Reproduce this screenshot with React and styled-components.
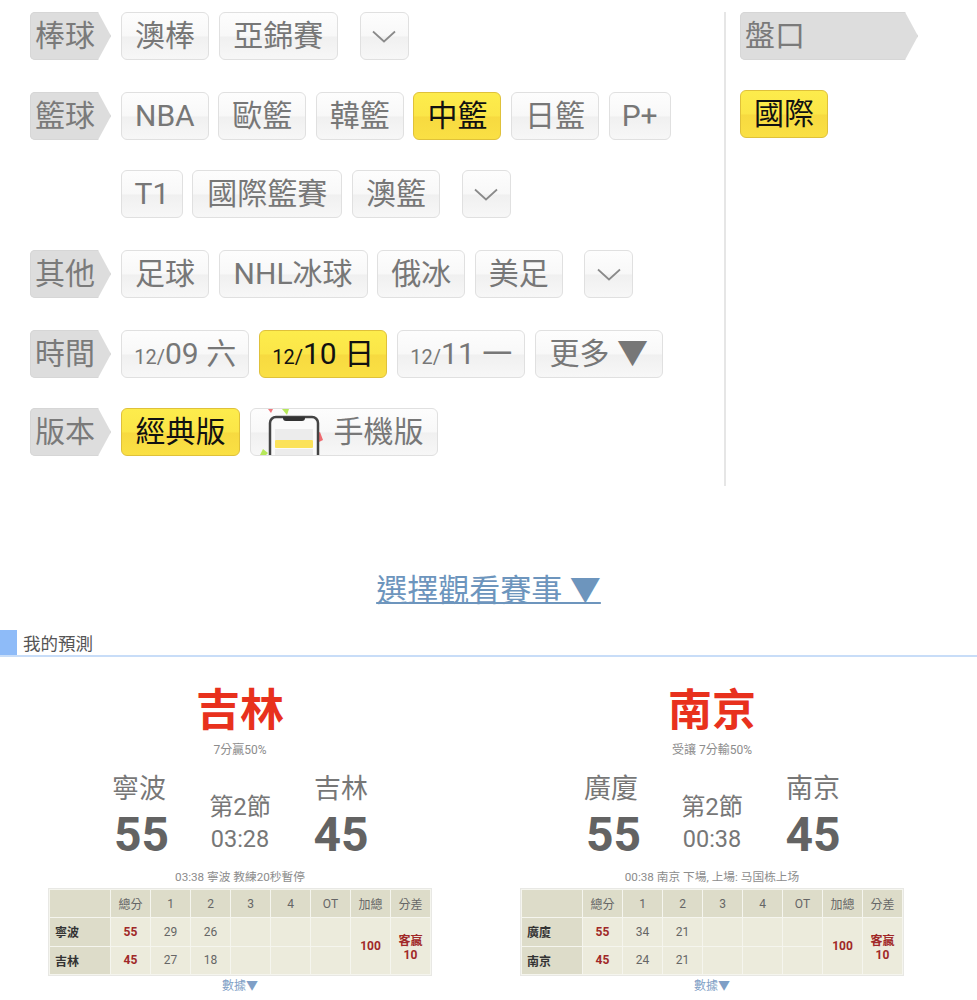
import React from 'react'
import styled, { createGlobalStyle, css } from 'styled-components'

const GlobalStyle = createGlobalStyle`
  html, body {
    margin: 0;
    padding: 0;
    background: #fff;
    font-family: Roboto, "Noto Sans CJK TC", sans-serif;
  }
`

const Page = styled.div`
  width: 977px;
`

const TopPanel = styled.div`
  display: flex;
  margin-top: 12px;
`

const LeftColumn = styled.div`
  width: 726px;
  height: 474px;
  box-sizing: border-box;
  border-right: 2px solid #e6e6e6;
  padding-left: 30px;
`

const RightColumn = styled.div`
  padding-left: 14px;
`

const Row = styled.div`
  display: flex;
  margin-bottom: ${(p) => (p.$tight ? 30 : 32)}px;
`

const Label = styled.div`
  flex: none;
  width: ${(p) => p.$width || 81}px;
  height: 48px;
  margin-right: 10px;
  padding-left: 5px;
  box-sizing: border-box;
  background: #dddddd;
  border-radius: 5px 0 0 5px;
  box-shadow: inset 0 0 0 1px #d6d6d6;
  clip-path: polygon(0 0, calc(100% - 13px) 0, 100% 50%, calc(100% - 13px) 100%, 0 100%);
  color: #7a7a7a;
  font-size: 30px;
  line-height: 47px;
`

const Buttons = styled.div`
  display: flex;
  flex-wrap: wrap;
  gap: 30px 9.6px;
`

const buttonBase = css`
  flex: none;
  height: 48px;
  box-sizing: border-box;
  border-radius: 6px;
  border: 1px solid #e0e0e0;
  background: linear-gradient(#fdfdfd 0%, #f8f8f8 50%, #f0f0f0 52%, #f7f7f7 100%);
  color: #777;
`

const Button = styled.div`
  ${buttonBase}
  padding: 0 ${(p) => p.$pad || 13}px;
  font-size: 30px;
  line-height: 45px;
  white-space: nowrap;
  ${(p) =>
    p.$active &&
    css`
      background: linear-gradient(#fdec4c 0%, #fbe648 50%, #f7da40 52%, #fae044 100%);
      border-color: #dfc13a;
      color: #111;
    `}
`

const SmallMonth = styled.span`
  font-size: 20px;
`

const BigArrow = styled.span`
  font-size: 31px;
  line-height: 40px;
`

const ChevronButton = styled.div`
  ${buttonBase}
  width: 49px;
  margin-left: 12px;
  display: flex;
  align-items: center;
  justify-content: center;
  color: #8a8a8a;
`

const PhoneButton = styled.div`
  ${buttonBase}
  display: flex;
  align-items: center;
  width: 188px;
  font-size: 30px;
  line-height: 44px;
  overflow: hidden;
`

const PhoneIcon = styled.svg`
  flex: none;
  width: 83px;
  height: 46px;
`

const ResultLink = styled.a`
  display: block;
  margin-top: 82px;
  text-align: center;
  color: #6d95bd;
  font-size: 31px;
  line-height: 46px;
  text-decoration: underline;
  text-decoration-thickness: 2px;
`

const SectionTitle = styled.div`
  display: flex;
  align-items: center;
  gap: 6px;
  height: 27px;
  margin-top: 16px;
  box-sizing: border-box;
  border-bottom: 2px solid #c8ddf8;
  color: #555;
  font-size: 17.5px;
`

const TitleMark = styled.span`
  width: 17px;
  height: 25px;
  background: #8ebbf8;
`

const Cards = styled.div`
  display: flex;
  gap: 88px;
  padding: 26px 0 0 48px;
`

const Card = styled.div`
  width: 384px;
  text-align: center;
`

const Pick = styled.div`
  color: #e8311d;
  font-size: 44px;
  font-weight: 700;
  line-height: 56px;
`

const PickNote = styled.div`
  margin-top: 3px;
  color: #8c8c8c;
  font-size: 12px;
  line-height: 16px;
`

const Score = styled.div`
  display: flex;
  justify-content: center;
  margin-top: 12px;
`

const ScoreColumn = styled.div`
  width: 101px;
`

const TeamName = styled.div`
  color: #777;
  font-size: 27px;
  line-height: 38px;
`

const Points = styled.div`
  padding-left: ${(p) => (p.$home ? 5 : 0)}px;
  color: #636363;
  font-size: 48px;
  font-weight: 700;
  line-height: 54px;
`

const Period = styled.div`
  margin-top: 19px;
  color: #777;
  font-size: 24px;
  line-height: 36px;
`

const Clock = styled.div`
  color: #777;
  font-size: 23.5px;
  line-height: 28px;
`

const Message = styled.div`
  margin-top: 6px;
  color: #8c8c8c;
  font-size: 11.7px;
  line-height: 18px;
`

const ScoreTable = styled.table`
  width: 384px;
  height: 88px;
  margin-top: 2px;
  table-layout: fixed;
  border-collapse: separate;
  border-spacing: 1px;
  border: 1px solid #e8e8e4;
  box-sizing: border-box;
  background: #f5f5ee;
  font-size: 12px;
  color: #666;
`

const Cell = styled.td`
  padding: 0;
  text-align: center;
  background: ${(p) => (p.$head ? '#dddcc9' : '#ecebdc')};
  ${(p) =>
    p.$hot &&
    css`
      color: #a02828;
      font-weight: 700;
    `}
  ${(p) =>
    p.$team &&
    css`
      padding-left: 5px;
      text-align: left;
      color: #333;
      font-weight: 700;
    `}
`

const DataLink = styled.div`
  margin-top: 1px;
  color: #7f9fc6;
  font-size: 12px;
  line-height: 18px;
`

const games = [
  {
    pick: '吉林',
    note: '7分贏50%',
    period: '03:28',
    message: '03:38 寧波 教練20秒暫停',
    home: { name: '寧波', total: 55, q: [29, 26] },
    away: { name: '吉林', total: 45, q: [27, 18] },
  },
  {
    pick: '南京',
    note: '受讓 7分輸50%',
    period: '00:38',
    message: '00:38 南京 下場, 上場: 马国栋上场',
    home: { name: '廣廈', total: 55, q: [34, 21] },
    away: { name: '南京', total: 45, q: [24, 21] },
  },
]

const Chevron = () => (
  <svg width="24" height="13" viewBox="0 0 24 13" fill="none">
    <path d="M1 1.5L12 11.5L23 1.5" stroke="currentColor" strokeWidth="1.7" />
  </svg>
)

const Phone = () => (
  <PhoneIcon viewBox="0 0 83 46">
    <path d="M17 0h5l-2 4z" fill="#f0767c" />
    <path d="M31 0h7l-2 6z" fill="#b6e85a" />
    <path d="M65 25l4-2 3 8-4 2z" fill="#ee6a70" />
    <path d="M9 46l3-6 5 4-2 2z" fill="#b6e85a" />
    <path d="M19 46V14a6 6 0 0 1 6-6h36a6 6 0 0 1 6 6v32" fill="#fafafa" stroke="#444" strokeWidth="2.5" />
    <path d="M32 8h22v1a3 3 0 0 1-3 3H35a3 3 0 0 1-3-3z" fill="#333" />
    <rect x="24" y="20" width="38" height="11" fill="#ececec" />
    <rect x="24" y="31" width="38" height="8" rx="1" fill="#fbe25a" />
    <rect x="24" y="40" width="38" height="6" fill="#ececec" />
  </PhoneIcon>
)

const GameCard = ({ game }) => {
  const { home, away } = game
  return (
    <Card>
      <Pick>{game.pick}</Pick>
      <PickNote>{game.note}</PickNote>
      <Score>
        <ScoreColumn>
          <TeamName>{home.name}</TeamName>
          <Points $home>{home.total}</Points>
        </ScoreColumn>
        <ScoreColumn>
          <Period>第2節</Period>
          <Clock>{game.period}</Clock>
        </ScoreColumn>
        <ScoreColumn>
          <TeamName>{away.name}</TeamName>
          <Points>{away.total}</Points>
        </ScoreColumn>
      </Score>
      <Message>{game.message}</Message>
      <ScoreTable>
        <colgroup>
          <col style={{ width: 60 }} />
        </colgroup>
        <tbody>
          <tr>
            <Cell $head />
            {['總分', '1', '2', '3', '4', 'OT', '加總', '分差'].map((h) => (
              <Cell $head key={h}>
                {h}
              </Cell>
            ))}
          </tr>
          <tr>
            <Cell $head $team>
              {home.name}
            </Cell>
            <Cell $hot>{home.total}</Cell>
            <Cell>{home.q[0]}</Cell>
            <Cell>{home.q[1]}</Cell>
            <Cell />
            <Cell />
            <Cell />
            <Cell $hot rowSpan={2}>
              100
            </Cell>
            <Cell $hot rowSpan={2}>
              客贏
              <br />
              10
            </Cell>
          </tr>
          <tr>
            <Cell $head $team>
              {away.name}
            </Cell>
            <Cell $hot>{away.total}</Cell>
            <Cell>{away.q[0]}</Cell>
            <Cell>{away.q[1]}</Cell>
            <Cell />
            <Cell />
            <Cell />
          </tr>
        </tbody>
      </ScoreTable>
      <DataLink>數據▼</DataLink>
    </Card>
  )
}

const DateButton = ({ day, weekday, active }) => (
  <Button $active={active} $pad={12.25}>
    <SmallMonth>12/</SmallMonth>
    {day} {weekday}
  </Button>
)

export default function App() {
  return (
    <Page>
      <GlobalStyle />
      <TopPanel>
        <LeftColumn>
          <Row>
            <Label>棒球</Label>
            <Buttons>
              <Button>澳棒</Button>
              <Button $pad={13.7}>亞錦賽</Button>
              <ChevronButton>
                <Chevron />
              </ChevronButton>
            </Buttons>
          </Row>
          <Row>
            <Label>籃球</Label>
            <Buttons>
              <Button>NBA</Button>
              <Button>歐籃</Button>
              <Button>韓籃</Button>
              <Button $active>中籃</Button>
              <Button>日籃</Button>
              <Button $pad={12}>P+</Button>
              <Button $pad={12.5}>T1</Button>
              <Button $pad={14}>國際籃賽</Button>
              <Button>澳籃</Button>
              <ChevronButton>
                <Chevron />
              </ChevronButton>
            </Buttons>
          </Row>
          <Row>
            <Label>其他</Label>
            <Buttons>
              <Button>足球</Button>
              <Button $pad={14}>NHL冰球</Button>
              <Button>俄冰</Button>
              <Button>美足</Button>
              <ChevronButton>
                <Chevron />
              </ChevronButton>
            </Buttons>
          </Row>
          <Row $tight>
            <Label>時間</Label>
            <Buttons>
              <DateButton day="09" weekday="六" />
              <DateButton day="10" weekday="日" active />
              <DateButton day="11" weekday="一" />
              <Button $pad={13.5}>
                更多 <BigArrow>▼</BigArrow>
              </Button>
            </Buttons>
          </Row>
          <Row>
            <Label>版本</Label>
            <Buttons>
              <Button $active $pad={13.5}>
                經典版
              </Button>
              <PhoneButton>
                <Phone />
                手機版
              </PhoneButton>
            </Buttons>
          </Row>
        </LeftColumn>
        <RightColumn>
          <Row $tight>
            <Label $width={178}>盤口</Label>
          </Row>
          <Button $active style={{ width: 88 }}>
            國際
          </Button>
        </RightColumn>
      </TopPanel>
      <ResultLink>選擇觀看賽事 ▼</ResultLink>
      <SectionTitle>
        <TitleMark />
        我的預測
      </SectionTitle>
      <Cards>
        {games.map((g) => (
          <GameCard game={g} key={g.pick} />
        ))}
      </Cards>
    </Page>
  )
}
